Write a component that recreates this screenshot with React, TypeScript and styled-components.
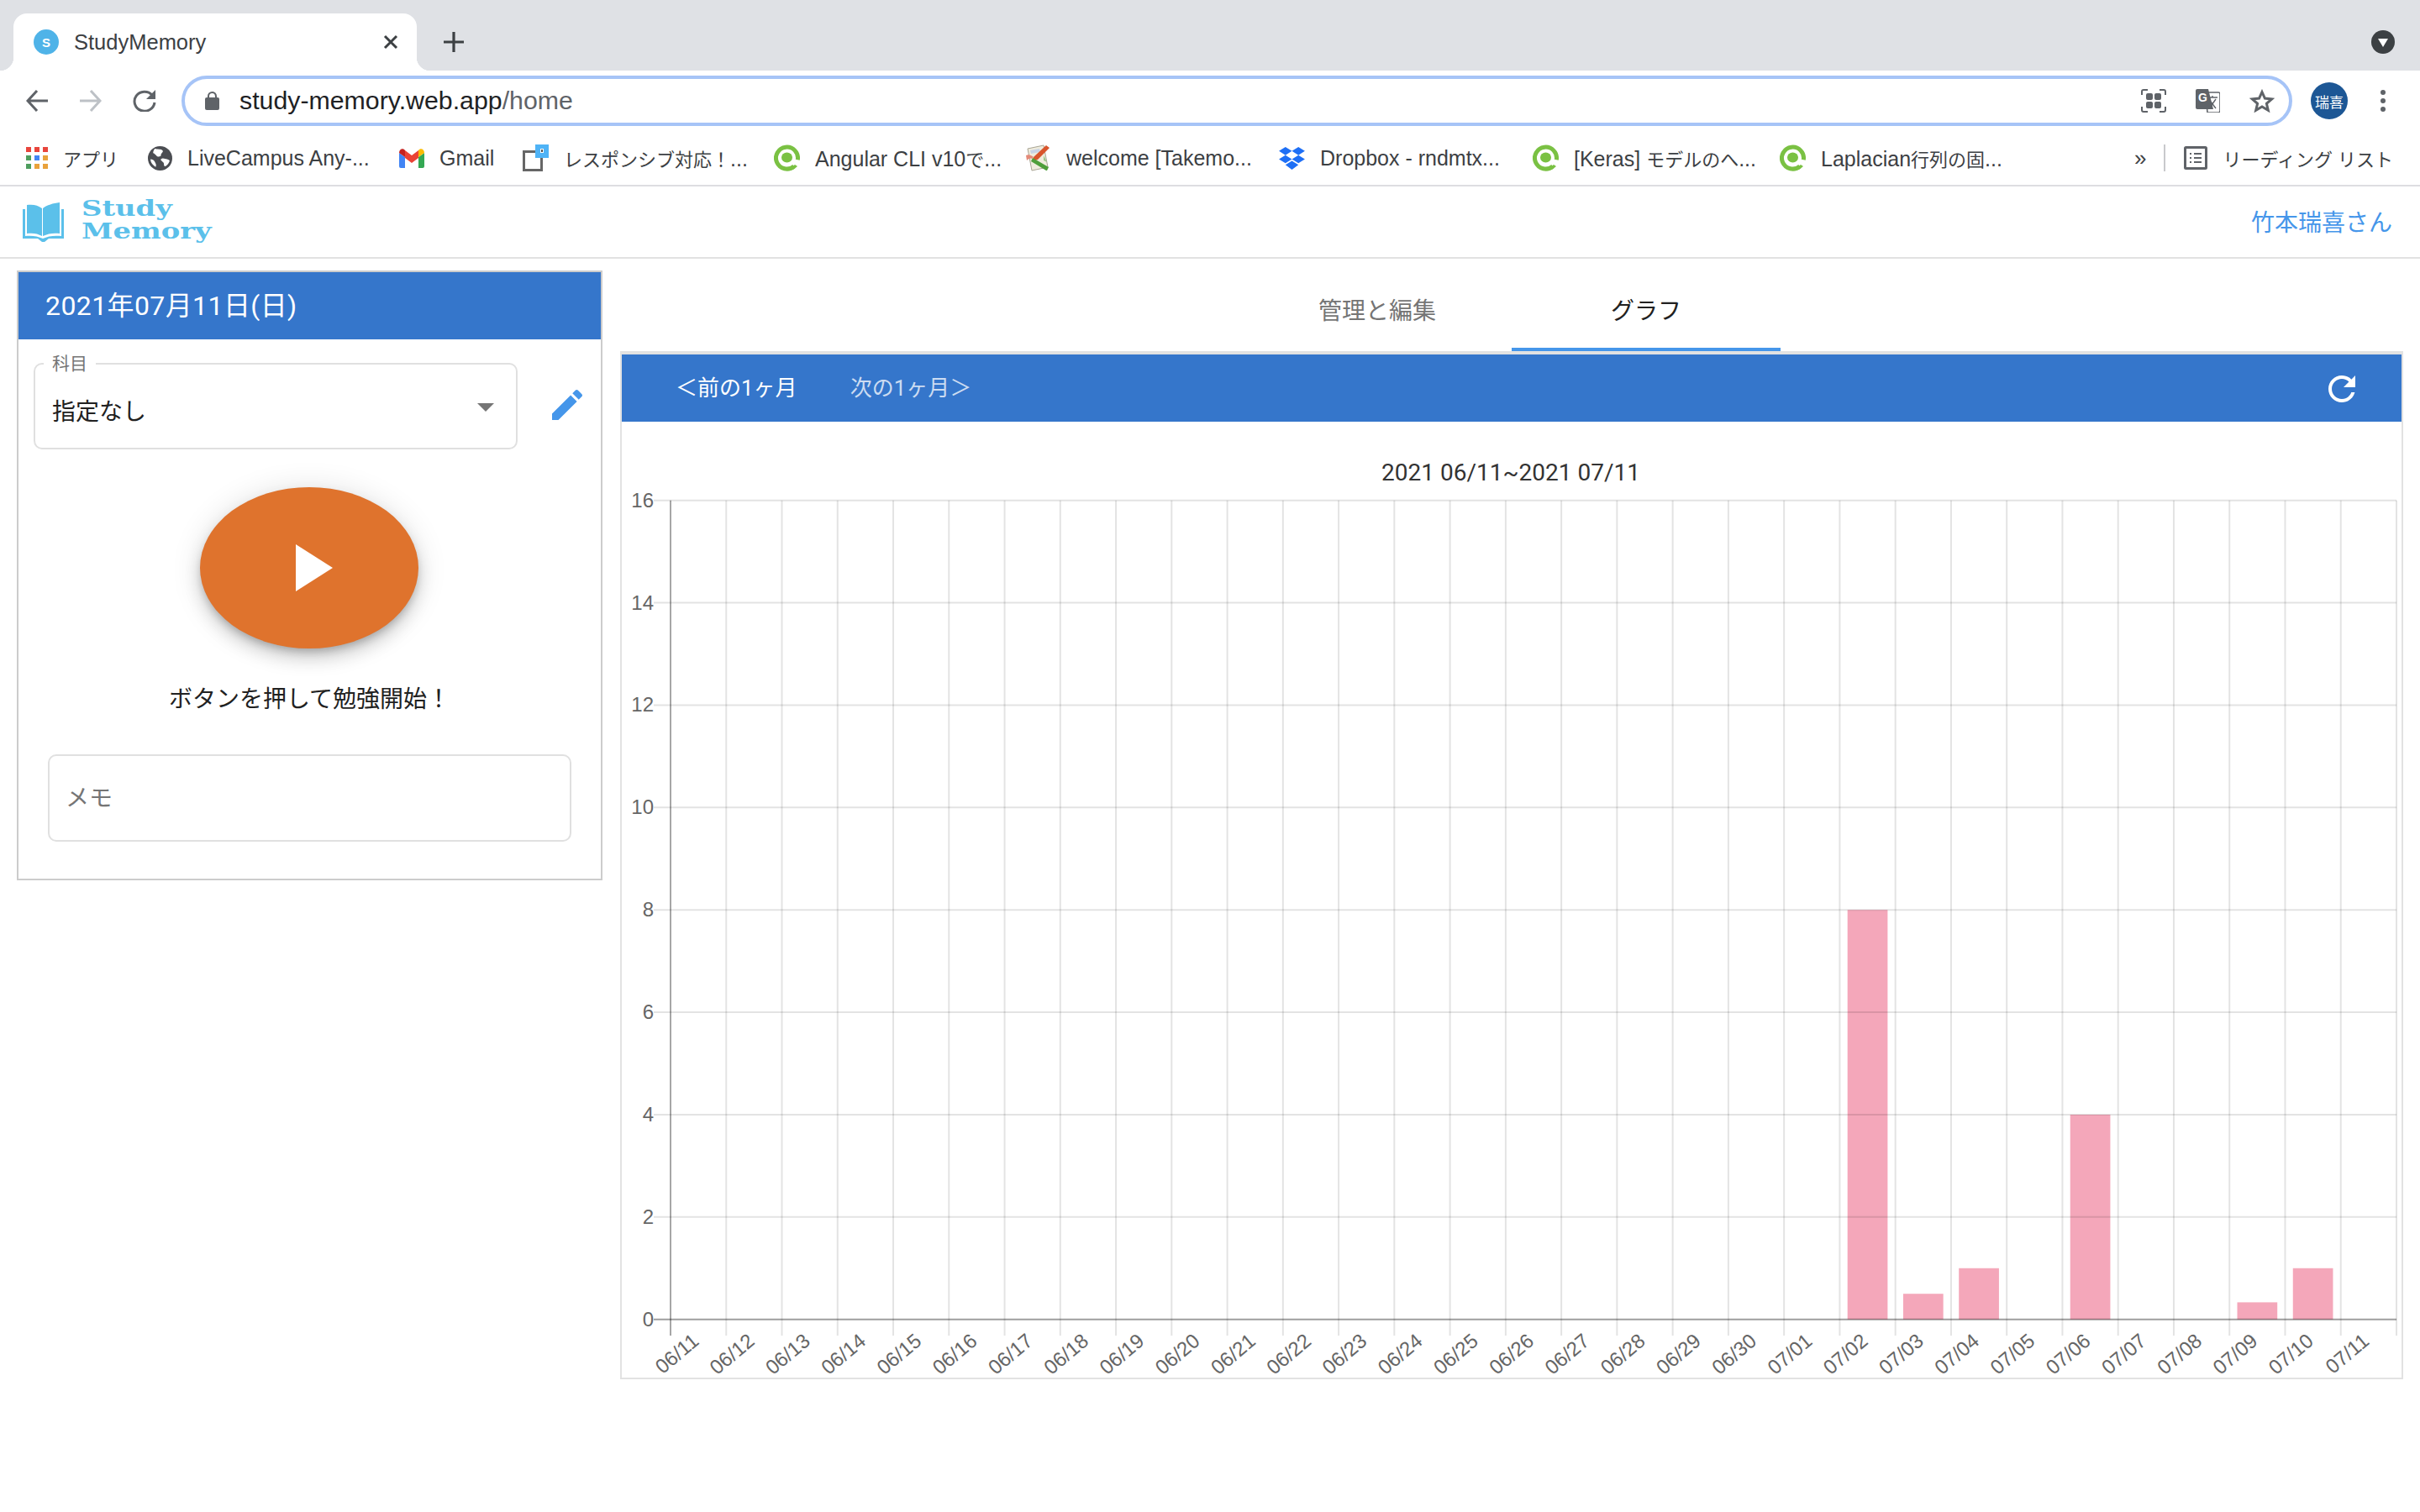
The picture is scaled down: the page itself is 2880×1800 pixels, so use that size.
import React from 'react';
import styled, { createGlobalStyle } from 'styled-components';

const GlobalStyle = createGlobalStyle`
  html, body {
    margin: 0;
    padding: 0;
    background: white;
  }
  * {
    box-sizing: border-box;
  }
`;

const uiFont = `Roboto, "Noto Sans CJK JP", sans-serif`;
const chromeFont = `"Liberation Sans", "Noto Sans CJK JP", sans-serif`;
const blue = '#3576cb';
const linkBlue = '#4596ea';

const Page = styled.div`
  width: 2880px;
  height: 1800px;
  overflow: hidden;
  background: white;
  font-family: ${uiFont};
`;

/* browser chrome */

const TabStrip = styled.div`
  height: 84px;
  background: #dfe1e5;
  display: flex;
  align-items: flex-end;
  padding-left: 16px;
`;

const BrowserTab = styled.div`
  position: relative;
  width: 480px;
  height: 68px;
  background: white;
  border-radius: 16px 16px 0 0;
  display: flex;
  align-items: center;
  padding-left: 24px;
  font-family: ${chromeFont};
  font-size: 25.5px;
  color: #3c4043;

  &::before,
  &::after {
    content: '';
    position: absolute;
    bottom: 0;
    width: 16px;
    height: 16px;
  }
  &::before {
    left: -16px;
    background: radial-gradient(circle at 0 0, transparent 16px, white 16.5px);
  }
  &::after {
    right: -16px;
    background: radial-gradient(circle at 100% 0, transparent 16px, white 16.5px);
  }
`;

const Favicon = styled.span`
  width: 30px;
  height: 30px;
  border-radius: 50%;
  background: #4fb3e8;
  color: white;
  font-size: 15px;
  font-weight: 700;
  display: flex;
  align-items: center;
  justify-content: center;
  margin-right: 18px;
`;

const TabClose = styled.svg`
  width: 18px;
  height: 18px;
  margin-left: auto;
  margin-right: 22px;
`;

const NewTab = styled.svg`
  width: 26px;
  height: 26px;
  margin-left: 31px;
  align-self: center;
  margin-top: 16px;
`;

const StripMenu = styled.span`
  width: 28px;
  height: 28px;
  border-radius: 50%;
  background: #3c4043;
  margin-left: auto;
  margin-right: 30px;
  margin-bottom: 20px;
  display: flex;
  align-items: center;
  justify-content: center;

  &::after {
    content: '';
    border-left: 6px solid transparent;
    border-right: 6px solid transparent;
    border-top: 10px solid white;
    margin-top: 2px;
  }
`;

const Toolbar = styled.div`
  height: 72px;
  display: flex;
  align-items: center;
  padding-left: 12px;
`;

const NavButton = styled.span`
  width: 64px;
  display: flex;
  justify-content: center;
`;

const Omnibox = styled.div`
  width: 2512px;
  height: 60px;
  margin-left: 12px;
  border: 4px solid #a6c4f7;
  border-radius: 30px;
  display: flex;
  align-items: center;
  padding: 0 17px 0 24px;
  font-family: ${chromeFont};
  font-size: 30.3px;
`;

const UrlHost = styled.span`
  color: #202124;
  margin-left: 24px;
`;

const UrlPath = styled.span`
  color: #5f6368;
`;

const OmniActions = styled.div`
  margin-left: auto;
  display: flex;
  align-items: center;
  gap: 35px;
`;

const Avatar = styled.span`
  width: 44px;
  height: 44px;
  border-radius: 50%;
  background: #1d5795;
  color: white;
  font-size: 17px;
  display: flex;
  align-items: center;
  justify-content: center;
  margin-left: 22px;
`;

const MenuDots = styled.svg`
  width: 6px;
  height: 26px;
  margin-left: 39px;
`;

const BookmarkBar = styled.div`
  height: 66px;
  border-bottom: 2px solid #dddde1;
  display: flex;
  align-items: center;
  gap: 35px;
  padding: 0 32px 0 31px;
  font-family: ${chromeFont};
  font-size: 25px;
  color: #3c4043;
`;

const Bookmark = styled.div`
  display: flex;
  align-items: center;
  gap: 18px;
`;

const BookmarkLabel = styled.span<{ $width?: number }>`
  width: ${props => (props.$width ? `${props.$width}px` : 'auto')};
  white-space: nowrap;
`;

const Cjk = styled.span`
  font-size: 22px;
`;

const AppsGrid = styled.span`
  display: grid;
  grid-template-columns: repeat(3, 6px);
  gap: 4px;
`;

const AppsDot = styled.span<{ $color: string }>`
  height: 6px;
  background: ${props => props.$color};
`;

const MoreBookmarks = styled.span`
  margin-left: auto;
  font-size: 26px;
`;

const BarDivider = styled.span`
  width: 2px;
  height: 32px;
  background: #c8c9cc;
  margin: 0 -13px 0 -14px;
`;

/* app header */

const AppHeader = styled.header`
  height: 86px;
  border-bottom: 2px solid #e2e2e2;
  display: flex;
  align-items: center;
  padding: 0 33px 0 27px;
`;

const LogoText = styled.div`
  margin-left: 21px;
  margin-bottom: 4px;
  font-family: "DejaVu Serif", serif;
  font-weight: 700;
  font-size: 26px;
  line-height: 27px;
  color: #5bc0ea;
  transform: scaleX(1.3);
  transform-origin: left center;
`;

const UserName = styled.a`
  margin-left: auto;
  margin-bottom: 2px;
  font-size: 28px;
  color: ${linkBlue};
`;

/* main */

const Main = styled.main`
  display: flex;
  align-items: flex-start;
  padding-left: 20px;
`;

const SidePanel = styled.section`
  width: 697px;
  height: 726px;
  margin-top: 14px;
  border: 2px solid #ccc;
  display: flex;
  flex-direction: column;
`;

const DateBar = styled.h2`
  margin: 0;
  height: 80px;
  background: ${blue};
  color: white;
  font-size: 32px;
  font-weight: 400;
  letter-spacing: 0.4px;
  display: flex;
  align-items: center;
  padding: 0 0 6px 32px;
`;

const SubjectRow = styled.div`
  display: flex;
  align-items: center;
  margin-top: 28px;
  padding-left: 18px;
`;

const SubjectSelect = styled.div`
  position: relative;
  width: 576px;
  height: 103px;
  border: 2px solid #e0e0e0;
  border-radius: 10px;
  display: flex;
  align-items: center;
  justify-content: space-between;
  padding: 8px 12px 0 20px;
  font-size: 28px;
  color: #212121;
`;

const SelectArrow = styled.svg`
  width: 48px;
  height: 48px;
  margin-top: -8px;
`;

const FloatingLabel = styled.span`
  position: absolute;
  top: -13px;
  left: 10px;
  padding: 0 10px;
  background: white;
  font-size: 21px;
  line-height: 24px;
  color: #757575;
`;

const EditIcon = styled.svg`
  width: 48px;
  height: 48px;
  margin-left: 35px;
  margin-top: -4px;
  fill: ${linkBlue};
`;

const PlayButton = styled.button`
  align-self: center;
  width: 260px;
  height: 192px;
  margin: 45px 2px 0 0;
  padding: 0;
  border: none;
  border-radius: 50%;
  background: #df732d;
  box-shadow: 0 6px 10px -2px rgba(0, 0, 0, 0.2), 0 12px 20px 0 rgba(0, 0, 0, 0.14),
    0 2px 36px 0 rgba(0, 0, 0, 0.12);
  display: flex;
  align-items: center;
  justify-content: center;
`;

const PlayCaption = styled.p`
  margin: 41px 0 0;
  line-height: 40px;
  text-align: center;
  font-size: 28px;
  color: #212121;
`;

const MemoField = styled.div`
  align-self: center;
  width: 623px;
  height: 104px;
  margin-top: 45px;
  border: 2px solid #e0e0e0;
  border-radius: 10px;
  display: flex;
  align-items: center;
  padding: 0 0 4px 19px;
  font-size: 28px;
  color: #757575;
`;

const Content = styled.section`
  width: 2122px;
  margin-left: 21px;
`;

const TabRow = styled.nav`
  height: 110px;
  display: flex;
  justify-content: center;
`;

const ContentTab = styled.div<{ $active?: boolean }>`
  width: 320px;
  display: flex;
  align-items: center;
  justify-content: center;
  padding-top: 14px;
  font-size: 28px;
  color: ${props => (props.$active ? '#212121' : '#757575')};
  border-bottom: 4px solid ${props => (props.$active ? linkBlue : 'transparent')};
`;

const ChartCard = styled.div`
  height: 1224px;
  border: 2px solid #e2e2e2;
  border-top-width: 4px;
`;

const ChartToolbar = styled.div`
  height: 80px;
  background: ${blue};
  display: flex;
  align-items: center;
  gap: 63px;
  padding: 0 47px 0 64px;
  font-size: 26px;
`;

const MonthButton = styled.span<{ $disabled?: boolean }>`
  margin-bottom: 5px;
  color: ${props => (props.$disabled ? 'rgba(255, 255, 255, 0.75)' : 'white')};
`;

const RefreshIcon = styled.svg`
  width: 48px;
  height: 48px;
  margin-left: auto;
  margin-top: 2px;
  fill: white;
`;

const ChartSvg = styled.svg`
  display: block;
  width: 2118px;
  height: 1138px;
`;

const ChartTitle = styled.text`
  font-family: ${uiFont};
  font-size: 28px;
  fill: #333;
  text-anchor: middle;
`;

const TickLabel = styled.text`
  font-family: "Liberation Sans", sans-serif;
  font-size: 24px;
  fill: #666;
  text-anchor: end;
`;

/* chart data, in page pixels */

const plotLeft = 798;
const plotRight = 2852;
const plotTop = 595.7;
const zeroY = 1570.7;
const tickBottom = 1590;
const axisLeft = 778;
const unitHeight = (zeroY - plotTop) / 16;
const days = [
  ...Array.from({ length: 20 }, (_, i) => `06/${i + 11}`),
  ...Array.from({ length: 11 }, (_, i) => `07/${String(i + 1).padStart(2, '0')}`)
];
const slot = (plotRight - plotLeft) / days.length;
const values: { [day: string]: number } = {
  '07/02': 8,
  '07/03': 0.5,
  '07/04': 1,
  '07/06': 4,
  '07/09': 1 / 3,
  '07/10': 1
};
const yTicks = [0, 2, 4, 6, 8, 10, 12, 14, 16];

const StudyChart = () => (
  <ChartSvg viewBox="740 502 2118 1138">
    <ChartTitle x={1798} y={572}>
      2021 06/11~2021 07/11
    </ChartTitle>
    {days.map((day, i) =>
      values[day] ? (
        <rect
          key={day}
          x={plotLeft + slot * (i + 0.14)}
          y={zeroY - values[day] * unitHeight}
          width={slot * 0.72}
          height={values[day] * unitHeight}
          fill="#f4a7ba"
        />
      ) : null
    )}
    {yTicks.map(tick => (
      <g key={tick}>
        <line
          x1={axisLeft}
          x2={plotRight}
          y1={zeroY - tick * unitHeight}
          y2={zeroY - tick * unitHeight}
          stroke={tick === 0 ? 'rgba(0,0,0,0.38)' : 'rgba(0,0,0,0.11)'}
          strokeWidth={2}
        />
        <TickLabel x={axisLeft} y={zeroY - tick * unitHeight + 8}>
          {tick}
        </TickLabel>
      </g>
    ))}
    {[...days, ''].map((day, i) => (
      <line
        key={i}
        x1={plotLeft + slot * i}
        x2={plotLeft + slot * i}
        y1={plotTop}
        y2={tickBottom}
        stroke={i === 0 ? 'rgba(0,0,0,0.35)' : 'rgba(0,0,0,0.11)'}
        strokeWidth={2}
      />
    ))}
    {days.map((day, i) => {
      const x = plotLeft + slot * (i + 0.5) + 2;
      return (
        <TickLabel key={day} x={x} y={1599} transform={`rotate(-40 ${x} 1599)`}>
          {day}
        </TickLabel>
      );
    })}
  </ChartSvg>
);

/* small drawings */

const GlobeIcon = () => (
  <svg width="29" height="29" viewBox="0 0 28 28">
    <circle cx="14" cy="14" r="14" fill="#4b4d52" />
    <path d="M8 3c3 1 7 0 9 2 1 2-2 3-2 5 1 2-4 3-5 1-1-1-3-3-4-3 0-2 1-4 2-5zM15 15c2-2 5 0 7 0 2 1 3 1 3 2-1 3-4 7-6 6-1-2 0-4-2-5-1-1-3-2-2-3zM3 15c2 0 4 1 5 3 1 2 2 3 1 6-3-2-6-5-6-9z" fill="white" />
  </svg>
);

const GmailIcon = () => (
  <svg width="30" height="23" viewBox="0 0 30 23">
    <path d="M0 5v16a2 2 0 0 0 2 2h5V10z" fill="#4285f4" />
    <path d="M30 5v16a2 2 0 0 1-2 2h-5V10z" fill="#34a853" />
    <path d="M7 2v9l8 6 8-6V2l-8 6z" fill="#ea4335" />
    <path d="M0 5c0-5 5-6 7-3v8L0 5z" fill="#c5221f" />
    <path d="M30 5c0-5-5-6-7-3v8l7-5z" fill="#fbbc04" />
  </svg>
);

const ResponsiveIcon = () => (
  <svg width="31" height="32" viewBox="0 0 31 32">
    <rect x="1.5" y="8.5" width="21" height="22" fill="white" stroke="#666" strokeWidth="3" />
    <rect x="15" y="0" width="16" height="16" fill="#4fb3f6" />
    <rect x="21" y="5" width="4" height="5" fill="white" />
    <rect x="22" y="6" width="2" height="3" fill="#555" />
  </svg>
);

const RingIcon = () => (
  <svg width="31" height="32" viewBox="0 0 31 32">
    <path d="M23.9 26A13 13 0 1 1 28.3 18.3" fill="none" stroke="#7ac143" strokeWidth="5" />
    <path d="M17 27c3 0 6-1 8-3l3 2c-3 3-7 5-11 5z" fill="#7ac143" />
    <ellipse cx="15.5" cy="15.5" rx="6.5" ry="6" fill="#7ac143" />
  </svg>
);

const WikiIcon = () => (
  <svg width="32" height="32" viewBox="0 0 32 32">
    <path d="M4 5l19-4 5 26-19 4z" fill="#efecdd" stroke="#a9a595" />
    <path d="M7 7l11-2 1 4-11 2z" fill="#c8d3e6" />
    <path d="M11 15L26 1l4 3-14 14-6 2z" fill="#d8552c" />
    <path d="M2 13c3-2 7 0 9 2l-2 2c-2-1-4 0-6 2z" fill="#e48a78" />
    <path d="M26 31L8 20l2-4 19 11-2 4z" fill="#4e9e3a" />
    <path d="M23 13l4 8-4-2z" fill="#9bc98b" />
  </svg>
);

const DropboxIcon = () => (
  <svg width="31" height="27" viewBox="0 0 32 28">
    <path d="M8 0l8 5-8 5-8-5zM24 0l8 5-8 5-8-5zM8 10l8 5-8 5-8-5zM24 10l8 5-8 5-8-5zM16 17l8 5-8 6-8-6z" fill="#1e6ff5" />
  </svg>
);

const ReadingIcon = () => (
  <svg width="28" height="28" viewBox="0 0 28 28">
    <rect x="1.5" y="1.5" width="25" height="25" rx="1" fill="white" stroke="#5f6368" strokeWidth="3" />
    <path d="M7 8h2v2H7zM12 8h9v2h-9zM7 13h2v2H7zM12 13h9v2h-9zM7 18h2v2H7zM12 18h9v2h-9z" fill="#5f6368" />
  </svg>
);

const BookLogo = () => (
  <svg width="49" height="47" viewBox="0 0 49 47">
    <path d="M0 8h3v32c7-1 15 0 21 3 6-3 14-4 22-3V8h3v35H31l-5 4h-3l-5-4H0z" fill="#5bc0ea" />
    <path d="M5 3c7-1 13 0 18 4v33c-5-3-11-4-18-3zM44 0v37c-7-1-14 0-20 3V7c5-4 12-6 20-7z" fill="#5bc0ea" />
  </svg>
);

const appColors = ['#e8453c', '#e8453c', '#e8453c', '#4e9e5e', '#4285f4', '#e9a23b', '#4e9e5e', '#e9a23b', '#e9a23b'];

const App = () => (
  <Page>
    <GlobalStyle />
    <TabStrip>
      <BrowserTab>
        <Favicon>S</Favicon>
        StudyMemory
        <TabClose viewBox="0 0 18 18">
          <path d="M2 2l14 14M16 2L2 16" stroke="#3c4043" strokeWidth="3" />
        </TabClose>
      </BrowserTab>
      <NewTab viewBox="0 0 26 26">
        <path d="M13 1v24M1 13h24" stroke="#3c4043" strokeWidth="3.2" />
      </NewTab>
      <StripMenu />
    </TabStrip>
    <Toolbar>
      <NavButton>
        <svg width="26" height="26" viewBox="0 0 26 26">
          <path d="M26 13H3M13 1L2 13l11 12" fill="none" stroke="#5f6368" strokeWidth="3" />
        </svg>
      </NavButton>
      <NavButton>
        <svg width="26" height="26" viewBox="0 0 26 26">
          <path d="M0 13h23M13 1l11 12-11 12" fill="none" stroke="#bdc1c6" strokeWidth="3" />
        </svg>
      </NavButton>
      <NavButton>
        <svg width="30" height="26" viewBox="0 0 30 26">
          <path d="M24 6a12 11.5 0 1 0 3 9" fill="none" stroke="#5f6368" strokeWidth="3" />
          <path d="M28 0v11H17z" fill="#5f6368" />
        </svg>
      </NavButton>
      <Omnibox>
        <svg width="17" height="22" viewBox="0 0 17 22">
          <path d="M4 8V5.5a4.5 4.5 0 0 1 9 0V8" fill="none" stroke="#5f6368" strokeWidth="2" />
          <rect y="7" width="17" height="15" rx="2" fill="#5f6368" />
        </svg>
        <UrlHost>study-memory.web.app</UrlHost>
        <UrlPath>/home</UrlPath>
        <OmniActions>
          <svg width="30" height="28" viewBox="0 0 30 28">
            <path d="M8 1H3a2 2 0 0 0-2 2v4M22 1h5a2 2 0 0 1 2 2v4M8 27H3a2 2 0 0 1-2-2v-4M22 27h5a2 2 0 0 0 2-2v-4" fill="none" stroke="#5f6368" strokeWidth="2" />
            <rect x="6" y="5" width="8" height="8" rx="2" fill="#5f6368" />
            <rect x="16" y="5" width="8" height="8" rx="2" fill="#5f6368" />
            <rect x="6" y="15" width="8" height="8" rx="2" fill="#5f6368" />
            <rect x="16" y="15" width="8" height="8" rx="2" fill="#5f6368" />
          </svg>
          <svg width="29" height="28" viewBox="0 0 29 28">
            <path d="M12 4h15a2 2 0 0 1 2 2v20a2 2 0 0 1-2 2H14z" fill="white" stroke="#5f6368" strokeWidth="1.6" />
            <path d="M15 10h11M20 8v2M17 22l7-10M18 15l6 8" fill="none" stroke="#5f6368" strokeWidth="1.4" />
            <path d="M2 0h13l6 24H2a2 2 0 0 1-2-2V2a2 2 0 0 1 2-2z" fill="#5f6368" />
            <text x="3" y="15" fontFamily="Liberation Sans" fontSize="14" fontWeight="700" fill="white">
              G
            </text>
          </svg>
          <svg width="30" height="28" viewBox="0 0 30 28">
            <path d="M15 3.5l3.4 7.6 8.2.8-6.2 5.4 1.9 8-7.3-4.3-7.3 4.3 1.9-8-6.2-5.4 8.2-.8z" fill="none" stroke="#5f6368" strokeWidth="3" />
          </svg>
        </OmniActions>
      </Omnibox>
      <Avatar>瑞喜</Avatar>
      <MenuDots viewBox="0 0 6 26">
        <circle cx="3" cy="3" r="3" fill="#5f6368" />
        <circle cx="3" cy="13" r="3" fill="#5f6368" />
        <circle cx="3" cy="23" r="3" fill="#5f6368" />
      </MenuDots>
    </Toolbar>
    <BookmarkBar>
      <Bookmark>
        <AppsGrid>
          {appColors.map((color, i) => (
            <AppsDot key={i} $color={color} />
          ))}
        </AppsGrid>
        <BookmarkLabel $width={66}>
          <Cjk>アプリ</Cjk>
        </BookmarkLabel>
      </Bookmark>
      <Bookmark>
        <GlobeIcon />
        <BookmarkLabel $width={217}>LiveCampus Any-...</BookmarkLabel>
      </Bookmark>
      <Bookmark>
        <GmailIcon />
        <BookmarkLabel $width={64}>Gmail</BookmarkLabel>
      </Bookmark>
      <Bookmark>
        <ResponsiveIcon />
        <BookmarkLabel $width={215}>
          <Cjk>レスポンシブ対応！</Cjk>...
        </BookmarkLabel>
      </Bookmark>
      <Bookmark>
        <RingIcon />
        <BookmarkLabel $width={214}>
          Angular CLI v10<Cjk>で</Cjk>...
        </BookmarkLabel>
      </Bookmark>
      <Bookmark>
        <WikiIcon />
        <BookmarkLabel $width={218}>welcome [Takemo...</BookmarkLabel>
      </Bookmark>
      <Bookmark>
        <DropboxIcon />
        <BookmarkLabel $width={218}>Dropbox - rndmtx...</BookmarkLabel>
      </Bookmark>
      <Bookmark>
        <RingIcon />
        <BookmarkLabel $width={210}>
          [Keras] <Cjk>モデルのへ</Cjk>...
        </BookmarkLabel>
      </Bookmark>
      <Bookmark>
        <RingIcon />
        <BookmarkLabel $width={214}>
          Laplacian<Cjk>行列の固</Cjk>...
        </BookmarkLabel>
      </Bookmark>
      <MoreBookmarks>»</MoreBookmarks>
      <BarDivider />
      <Bookmark>
        <ReadingIcon />
        <BookmarkLabel>
          <Cjk>リーディング リスト</Cjk>
        </BookmarkLabel>
      </Bookmark>
    </BookmarkBar>
    <AppHeader>
      <BookLogo />
      <LogoText>
        Study
        <br />
        Memory
      </LogoText>
      <UserName>竹本瑞喜さん</UserName>
    </AppHeader>
    <Main>
      <SidePanel>
        <DateBar>2021年07月11日(日)</DateBar>
        <SubjectRow>
          <SubjectSelect>
            <FloatingLabel>科目</FloatingLabel>
            指定なし
            <SelectArrow viewBox="0 0 24 24">
              <path d="M7 10l5 5 5-5z" fill="#757575" />
            </SelectArrow>
          </SubjectSelect>
          <EditIcon viewBox="0 0 24 24">
            <path d="M3 17.25V21h3.75L17.81 9.94l-3.75-3.75L3 17.25zM20.71 7.04c.39-.39.39-1.02 0-1.41l-2.34-2.34c-.39-.39-1.02-.39-1.41 0l-1.83 1.83 3.75 3.75 1.83-1.83z" />
          </EditIcon>
        </SubjectRow>
        <PlayButton>
          <svg width="96" height="96" viewBox="0 0 24 24">
            <path d="M8 5v14l11-7z" fill="white" />
          </svg>
        </PlayButton>
        <PlayCaption>ボタンを押して勉強開始！</PlayCaption>
        <MemoField>メモ</MemoField>
      </SidePanel>
      <Content>
        <TabRow>
          <ContentTab>管理と編集</ContentTab>
          <ContentTab $active>グラフ</ContentTab>
        </TabRow>
        <ChartCard>
          <ChartToolbar>
            <MonthButton>＜前の1ヶ月</MonthButton>
            <MonthButton $disabled>次の1ヶ月＞</MonthButton>
            <RefreshIcon viewBox="0 0 24 24">
              <path d="M17.65 6.35C16.2 4.9 14.21 4 12 4c-4.42 0-7.99 3.58-7.99 8s3.57 8 7.99 8c3.73 0 6.84-2.55 7.73-6h-2.08c-.82 2.33-3.04 4-5.65 4-3.31 0-6-2.69-6-6s2.69-6 6-6c1.66 0 3.14.69 4.22 1.78L13 11h7V4l-2.35 2.35z" />
            </RefreshIcon>
          </ChartToolbar>
          <StudyChart />
        </ChartCard>
      </Content>
    </Main>
  </Page>
);

export default App;
